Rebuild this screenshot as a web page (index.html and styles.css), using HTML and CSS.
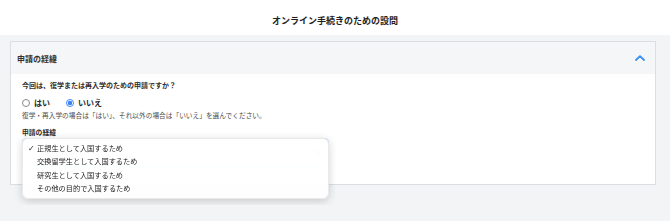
FILE: index.html
```html
<!DOCTYPE html>
<html lang="ja">
<head>
    <meta charset="UTF-8">
    <meta name="viewport" content="width=device-width, initial-scale=1.0">
    <title>オンライン手続きのための設問</title>
    <link rel="stylesheet" href="styles.css">
</head>
<body>
    <header class="page-title">オンライン手続きのための設問</header>

    <main class="page">
        <section class="card">
            <div class="card-head">
                <span>申請の経緯</span>
                <svg class="toggle" width="10" height="6" viewBox="0 0 10 6">
                    <path d="M1 5 L5 1.2 L9 5" fill="none" stroke="#3a8ef2" stroke-width="1.8" stroke-linecap="round" stroke-linejoin="round"/>
                </svg>
            </div>

            <div class="card-body">
                <p class="question">今回は、復学または再入学のための申請ですか？</p>

                <div class="radios">
                    <label class="radio"><span class="dot"></span>はい</label>
                    <label class="radio checked"><span class="dot"></span>いいえ</label>
                </div>

                <p class="help">復学・再入学の場合は「はい」、それ以外の場合は「いいえ」を選んでください。</p>

                <div class="field">
                    <div class="field-label">申請の経緯</div>
                    <div class="select-wrap">
                        <!-- the native select sits under its open menu -->
                        <div class="select">
                            <svg width="8" height="5" viewBox="0 0 8 5">
                                <path d="M1 1 L4 4 L7 1" fill="none" stroke="#999" stroke-width="1.2" stroke-linecap="round"/>
                            </svg>
                        </div>
                        <ul class="menu">
                            <li class="selected">正規生として入国するため</li>
                            <li>交換留学生として入国するため</li>
                            <li>研究生として入国するため</li>
                            <li>その他の目的で入国するため</li>
                        </ul>
                    </div>
                </div>
            </div>
        </section>
    </main>
</body>
</html>
```

FILE: styles.css
```css
* {
    box-sizing: border-box;
}
body {
    margin: 0;
    font-family: "Noto Sans CJK JP", "Noto Sans", sans-serif;
    color: #2b2b2b;
    background-color: #f3f4f6;
}
.page-title {
    height: 35px;
    padding-top: 14px;
    background-color: #fff;
    text-align: center;
    font-size: 9px;
    line-height: 13px;
    font-weight: bold;
    color: #1e1e1e;
}
.page {
    padding: 6px 14px 20px 10px;
}
.card {
    border: 1px solid #dcdee2;
    background-color: #fff;
}
.card-head {
    display: flex;
    align-items: center;
    justify-content: space-between;
    height: 32px;
    padding: 0 10px 0 6px;
    background-color: #f5f6f8;
    font-size: 8px;
    font-weight: bold;
    color: #333;
}
.toggle {
    display: block;
}
.card-body {
    padding: 6px 11px 17px 11px;
}
.question {
    margin: 0;
    font-size: 7px;
    line-height: 10px;
    font-weight: bold;
    color: #2e2e2e;
}
.radios {
    display: flex;
    gap: 16px;
    margin-top: 7px;
}
.radio {
    display: flex;
    align-items: center;
    gap: 4px;
    font-size: 8px;
    line-height: 12px;
    font-weight: bold;
    color: #2a2a2a;
}
.dot {
    width: 8px;
    height: 8px;
    border: 1px solid #8a8a8a;
    border-radius: 50%;
    background-color: #fff;
}
.radio.checked .dot {
    border-color: #3b82f6;
    background: radial-gradient(circle, #3b82f6 0 2px, #fff 2.4px);
}
.help {
    margin: 1px 0 0;
    font-size: 6.7px;
    line-height: 10px;
    color: #4a4a4a;
}
.field {
    margin-top: 7px;
}
.field-label {
    font-size: 6.8px;
    line-height: 10px;
    font-weight: bold;
    color: #2e2e2e;
}
.select-wrap {
    position: relative;
    width: 307px;
    margin-top: 1px;
}
.select {
    display: flex;
    align-items: center;
    justify-content: flex-end;
    height: 29px;
    padding: 0 6px 0 8px;
    border: 1px solid #c8daf6;
    border-radius: 4px;
}
.menu {
    position: absolute;
    top: 0;
    left: 0;
    width: 307px;
    margin: 0;
    padding: 3px 0;
    list-style: none;
    background-color: rgba(255, 255, 255, 0.9);
    backdrop-filter: blur(2px);
    border: 0.5px solid rgba(0, 0, 0, 0.08);
    border-radius: 6px;
    box-shadow: 0 2px 8px rgba(0, 0, 0, 0.18);
}
.menu li {
    position: relative;
    height: 13.3px;
    padding-left: 14px;
    font-size: 7.2px;
    line-height: 13.3px;
    color: #1c1c1c;
}
.menu li.selected::before {
    content: "✓";
    position: absolute;
    left: 5px;
    top: 0;
    font-family: "DejaVu Sans", sans-serif;
    font-size: 8px;
    font-weight: bold;
}
```
